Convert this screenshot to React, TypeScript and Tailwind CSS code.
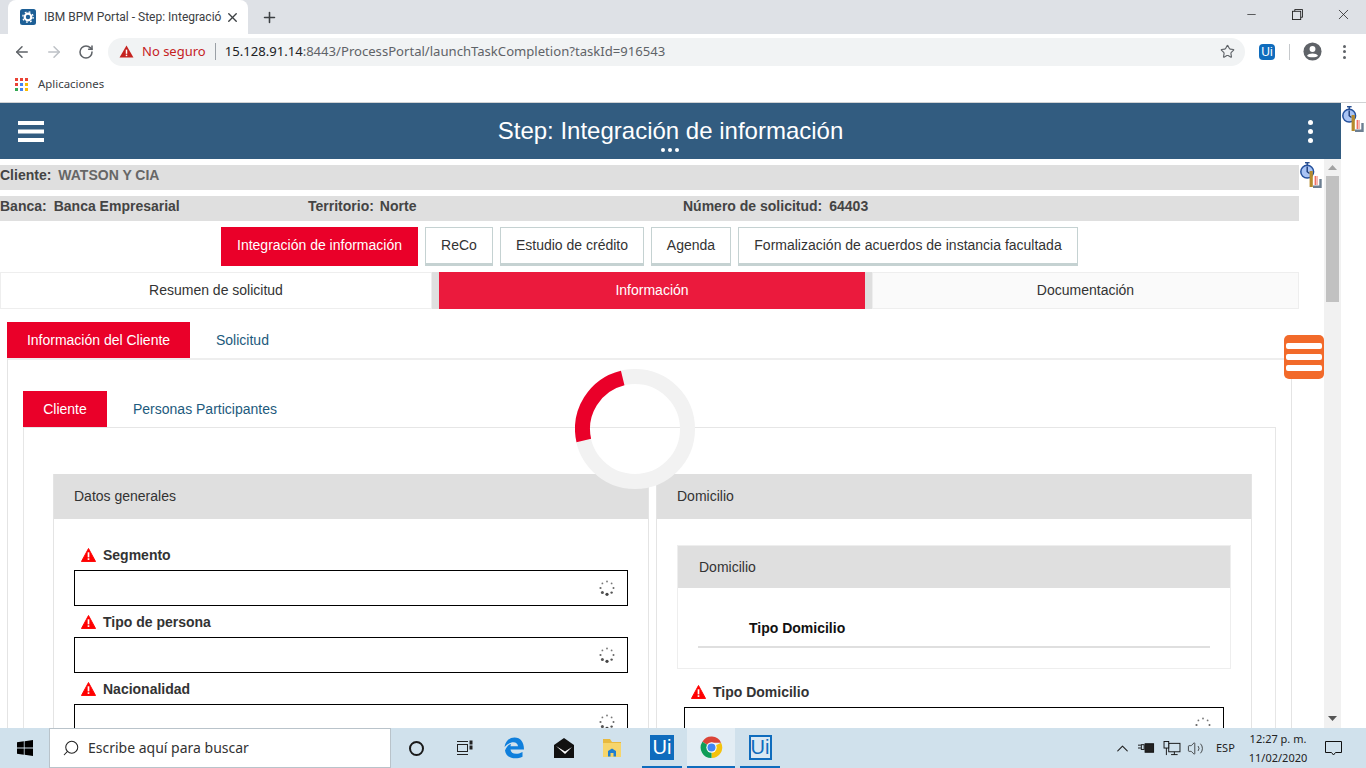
import React from 'react';
import { ArrowLeft, ArrowRight, RotateCw, Star, Plus, X, Minus, ChevronUp, Search, Volume2 } from 'lucide-react';

const chromeFont = "font-['Noto_Sans',sans-serif]";

const WarnIcon: React.FC<{ className?: string }> = ({ className }) => (
    <svg viewBox="0 0 16 15" className={className}>
        <path d="M8 0.5 L15.6 14.5 L0.4 14.5 Z" fill="#f00" stroke="#f00" strokeLinejoin="round" />
        <rect x="7.1" y="4.6" width="1.8" height="5.4" fill="#fff" />
        <rect x="7.1" y="11" width="1.8" height="1.8" fill="#fff" />
    </svg>
);

const Dots: React.FC = () => (
    <svg viewBox="0 0 16 16" className="w-4 h-4">
        <circle cx="8" cy="1.5" r="0.9" fill="#777" />
        <circle cx="12.6" cy="3.4" r="0.9" fill="#777" />
        <circle cx="14.5" cy="8" r="1" fill="#666" />
        <circle cx="12.6" cy="12.6" r="1.2" fill="#555" />
        <circle cx="8" cy="14.3" r="1.6" fill="#444" />
        <circle cx="3.4" cy="12.6" r="1.5" fill="#555" />
        <circle cx="1.5" cy="8" r="1.1" fill="#666" />
        <circle cx="3.4" cy="3.4" r="0.9" fill="#777" />
    </svg>
);

const Profiler: React.FC<{ className: string }> = ({ className }) => (
    <svg viewBox="0 0 22 26" className={className}>
        <rect x="5" y="0" width="4.6" height="1.4" fill="#2a4f8f" />
        <rect x="6.5" y="1" width="1.6" height="2" fill="#2a4f8f" />
        <circle cx="7.2" cy="9.7" r="6.4" fill="#a9c4f5" stroke="#24509c" strokeWidth="1.5" />
        <path d="M7.2 4.6 V9.7 L9.5 11.5" stroke="#1d3c78" strokeWidth="1.4" fill="none" />
        <rect x="9.6" y="9" width="3.2" height="16" fill="#b58a2c" />
        <rect x="14.6" y="14" width="1.5" height="9" fill="#ef6f65" />
        <rect x="16.1" y="14" width="1.9" height="9" fill="#f7b5ad" />
        <path d="M13 24.8 H20.5 V17" stroke="#6d7f92" strokeWidth="2.4" fill="none" />
    </svg>
);

const UiLogo: React.FC<{ outline?: boolean; className: string }> = ({ outline, className }) => (
    <div className={`flex items-center justify-center font-['Liberation_Sans',sans-serif] ${outline ? 'border-2 border-[#0f6cbd] text-[#0f6cbd] bg-[#d9e8f3]' : 'bg-[#0f6cbd] text-white'} ${className}`}>
        Ui
    </div>
);

const Field: React.FC<{ label: string }> = ({ label }) => (
    <div>
        <div className="flex items-center h-[31px] pl-[7px]">
            <WarnIcon className="w-[15px] h-[14px] mr-[7px]" />
            <span className="text-sm font-bold text-[#333]">{label}</span>
        </div>
        <div className="h-[36px] border border-black bg-white flex items-center justify-end pr-[12px]">
            <Dots />
        </div>
    </div>
);

const Browser: React.FC = () => (
    <div className={`${chromeFont} shrink-0`}>
        <div className="h-[34px] bg-[#dee1e6] flex items-end">
            <div className="ml-[8px] w-[240px] h-[34px] bg-white rounded-t-lg flex items-center pl-[12px] pr-[8px]">
                <svg viewBox="0 0 16 16" className="w-4 h-4 shrink-0">
                    <rect width="16" height="16" rx="2.5" fill="#1d5f96" />
                    <circle cx="8" cy="8" r="3.3" fill="none" stroke="#fff" strokeWidth="2.2" />
                    <circle cx="8" cy="8" r="5.2" fill="none" stroke="#fff" strokeWidth="1.3" strokeDasharray="1.8 2.3" />
                </svg>
                <span className="ml-[8px] text-xs font-['Roboto',sans-serif] text-[#3c4043] whitespace-nowrap">IBM BPM Portal - Step: Integració</span>
                <X size={15} strokeWidth={2.2} className="ml-auto text-[#3c4043]" />
            </div>
            <Plus size={17} strokeWidth={2.2} className="ml-[13px] mb-[8px] text-[#3c4043]" />
            <div className="ml-auto flex items-center h-[34px] pb-[6px] text-[#222]">
                <div className="w-[46px] flex justify-center"><Minus size={13} strokeWidth={1.3} /></div>
                <div className="w-[46px] flex justify-center">
                    <svg viewBox="0 0 12 12" className="w-[11px] h-[11px]" fill="none" stroke="#222">
                        <rect x="0.5" y="2.5" width="9" height="9" />
                        <path d="M3 2.5 V0.5 H11.5 V9 H9.5" />
                    </svg>
                </div>
                <div className="w-[46px] flex justify-center"><X size={17} strokeWidth={1.1} /></div>
            </div>
        </div>
        <div className="h-[35px] bg-white flex items-center">
            <ArrowLeft size={18} className="ml-[13px] text-[#5f6368]" />
            <ArrowRight size={18} className="ml-[14px] text-[#bdc1c6]" />
            <RotateCw size={16} strokeWidth={2.3} className="ml-[15px] text-[#5f6368]" />
            <div className="ml-[14px] w-[1137px] h-[28px] rounded-full bg-[#f1f3f4] flex items-center pl-[11px] pr-[10px]">
                <svg viewBox="0 0 16 14" className="w-[15px] h-[13px]">
                    <path d="M8 0.5 L15.5 13.5 H0.5 Z" fill="#c5221f" />
                    <rect x="7.2" y="5" width="1.6" height="4.5" fill="#fff" />
                    <rect x="7.2" y="10.4" width="1.6" height="1.6" fill="#fff" />
                </svg>
                <span className="ml-[8px] text-[13px] text-[#c5221f]">No seguro</span>
                <span className="ml-[9px] w-px h-[17px] bg-[#9aa0a6]"></span>
                <span className="ml-[9px] text-[13.1px] text-[#202124]">15.128.91.14<span className="text-[#5f6368]">:8443/ProcessPortal/launchTaskCompletion?taskId=916543</span></span>
                <Star size={15} strokeWidth={1.8} className="ml-auto text-[#5f6368]" />
            </div>
            <UiLogo className="ml-[14px] w-4 h-4 rounded-sm text-[12px]" />
            <span className="ml-[14px] w-px h-[16px] bg-[#c6c9cc]"></span>
            <svg viewBox="0 0 20 20" className="ml-[13px] w-[19px] h-[19px]">
                <circle cx="10" cy="10" r="9.5" fill="#5f6368" />
                <circle cx="10" cy="7.4" r="3.1" fill="#fff" />
                <path d="M4.2 14.4 C6 11.4 14 11.4 15.8 14.4 C14 16.6 6 16.6 4.2 14.4 Z" fill="#fff" />
            </svg>
            <div className="ml-[21px] flex flex-col gap-[2.5px]">
                <span className="w-[3px] h-[3px] rounded-full bg-[#5f6368]"></span>
                <span className="w-[3px] h-[3px] rounded-full bg-[#5f6368]"></span>
                <span className="w-[3px] h-[3px] rounded-full bg-[#5f6368]"></span>
            </div>
        </div>
        <div className="h-[34px] pb-[2px] bg-white flex items-center border-b border-[#d0d2d4] pl-[15px]">
            <svg viewBox="0 0 13 13" className="w-[13px] h-[13px]">
                {[['#ea4335', '#ea4335', '#ea4335'], ['#ea4335', '#4285f4', '#fbbc04'], ['#34a853', '#4285f4', '#fbbc04']].map((row, y) =>
                    row.map((c, x) => <rect key={`${x}${y}`} x={x * 5} y={y * 5} width="3" height="3" fill={c} />)
                )}
            </svg>
            <span className="ml-[10px] text-[11.4px] text-[#3c4043] mb-[2px]">Aplicaciones</span>
        </div>
    </div>
);

const Taskbar: React.FC = () => (
    <div className={`${chromeFont} h-[40px] shrink-0 bg-[#d0e1ec] flex items-stretch relative z-10`}>
        <div className="w-[49px] flex items-center justify-center">
            <svg viewBox="0 0 16 16" className="w-4 h-4 fill-black">
                <path d="M0 2.3 L6.8 1.3 V7.6 H0 Z M7.6 1.2 L16 0 V7.6 H7.6 Z M0 8.4 H6.8 V14.7 L0 13.7 Z M7.6 8.4 H16 V16 L7.6 14.8 Z" />
            </svg>
        </div>
        <div className="w-[342px] bg-white border border-[#b9c3ca] flex items-center pl-[12px]">
            <Search size={18} strokeWidth={1.4} className="text-[#222] -scale-x-100" />
            <span className="ml-[8px] text-sm text-[#333]">Escribe aquí para buscar</span>
        </div>
        <div className="w-[50px] flex items-center justify-center">
            <span className="w-[15px] h-[15px] rounded-full border-[2.5px] border-[#1a1a1a]"></span>
        </div>
        <div className="w-[46px] flex items-center justify-center">
            <svg viewBox="0 0 18 18" className="w-[18px] h-[18px]" fill="none" stroke="#222">
                <rect x="2.5" y="5.5" width="10" height="7" />
                <path d="M2 2.5 H13 M2 15.5 H13" />
                <rect x="15" y="2" width="2" height="3" fill="#222" />
                <rect x="15" y="7" width="2" height="3" fill="#222" />
            </svg>
        </div>
        <div className="w-[54px] flex items-center justify-center">
            <svg viewBox="0 0 22 22" className="w-[22px] h-[22px]">
                <path d="M1.5 10 C2.5 3.5 7 0.5 11.5 0.5 C17.5 0.5 21 5 21 12.5 H7.5 C7.8 17 13.5 18.3 19.5 15 V19.8 C12.5 23 3 21.5 2 13.5 C3.5 9.5 6 7.5 8 7 C7.7 7.8 7.6 8.6 7.5 9.3 H15 C15 4.5 8 2.8 1.5 10 Z" fill="#0f7fdc" />
            </svg>
        </div>
        <div className="w-[46px] flex items-center justify-center">
            <svg viewBox="0 0 22 22" className="w-[22px] h-[22px]">
                <path d="M1 8 L11 1 L21 8 V21 H1 Z" fill="#111" />
                <path d="M3 9 L12 14.5 L19 10 L12 17 Z" fill="#fff" />
            </svg>
        </div>
        <div className="w-[50px] flex items-center justify-center">
            <svg viewBox="0 0 22 22" className="w-[22px] h-[22px]">
                <path d="M2 2 H9 L11 5 H20 V20 H2 Z" fill="#e8b93f" />
                <rect x="2" y="6" width="18" height="14" fill="#f6d56b" />
                <path d="M7 19.5 V14 L11 11.5 L15 14 V19.5 H12.5 V16 H9.5 V19.5 Z" fill="#1f7fd0" />
            </svg>
        </div>
        <div className="ml-[5px] w-[40px] mr-[5px] flex items-center justify-center border-b-2 border-[#0f6cbd]">
            <UiLogo className="w-[24px] h-[25px] text-[20px]" />
        </div>
        <div className="w-[48px] bg-[#e3edf4] flex items-center justify-center border-b-2 border-[#0f6cbd]">
            <svg viewBox="0 0 24 24" className="w-[23px] h-[23px]">
                <path d="M12 12 L2.5 6 A11 11 0 0 1 22 7 H12 Z" fill="#db4437" />
                <path d="M12 12 L22 7 A11 11 0 0 1 12 23 Z" fill="#f4c20d" />
                <path d="M12 12 L12 23 A11 11 0 0 1 2.5 6 Z" fill="#0f9d58" />
                <circle cx="12" cy="12" r="5.4" fill="#fff" />
                <circle cx="12" cy="12" r="4.2" fill="#4285f4" />
            </svg>
        </div>
        <div className="ml-[5px] w-[40px] flex items-center justify-center border-b-2 border-[#0f6cbd]">
            <UiLogo outline className="w-[23px] h-[25px] text-[20px]" />
        </div>
        <div className="ml-auto flex items-center pr-[16px] text-[#222]">
            <ChevronUp size={19} strokeWidth={1.4} />
            <svg viewBox="0 0 18 12" className="ml-[6px] w-[17px] h-[12px]" fill="none" stroke="#111">
                <path d="M0 3 H3 M0 6 H3" />
                <rect x="3.5" y="2.5" width="3" height="5" />
                <rect x="7.5" y="1.5" width="9" height="9" fill="#222" />
            </svg>
            <svg viewBox="0 0 18 16" className="ml-[8px] w-[18px] h-[15px]" fill="none" stroke="#111">
                <rect x="5.5" y="2.5" width="12" height="9" />
                <rect x="0.5" y="0.5" width="5" height="7" fill="#d0e1ec" />
                <path d="M3 7.5 V15 M8 14.5 H15 M11.5 11.5 V14.5" />
            </svg>
            <Volume2 size={17} strokeWidth={1.1} className="ml-[6px]" />
            <span className="ml-[12px] text-[11px] w-[24px]">ESP</span>
            <div className="ml-[8px] w-[60px] text-center text-[11px] leading-[19px] text-[#222]">
                <div>12:27 p. m.</div>
                <div>11/02/2020</div>
            </div>
            <div className="ml-[8px] w-[34px] flex justify-center">
                <svg viewBox="0 0 17 15" className="w-[17px] h-[15px]" fill="none" stroke="#111">
                    <path d="M0.5 0.5 H16.5 V11.5 H10.5 L8.5 14 L6.5 11.5 H0.5 Z" />
                </svg>
            </div>
        </div>
    </div>
);

const App: React.FC = () => {
    return (
        <div className="w-[1366px] h-[768px] overflow-hidden flex flex-col bg-white font-['Liberation_Sans',Arial,sans-serif] text-[#333]">
            <Browser />
            <div className="flex-1 min-h-0 flex relative overflow-hidden">
                <div className="w-[1341px] flex flex-col">
                    <header className="h-[56px] shrink-0 bg-[#325c80] flex items-center justify-center relative text-white">
                        <svg viewBox="0 0 26 21" className="absolute left-[18px] top-[18px] w-[26px] h-[21px] fill-white">
                            <rect width="26" height="4" y="0" />
                            <rect width="26" height="4" y="8.5" />
                            <rect width="26" height="4" y="17" />
                        </svg>
                        <h1 className="text-2xl">Step: Integración de información</h1>
                        <div className="absolute left-[661px] bottom-[7px] flex gap-[3px]">
                            <span className="w-1 h-1 rounded-full bg-white"></span>
                            <span className="w-1 h-1 rounded-full bg-white"></span>
                            <span className="w-1 h-1 rounded-full bg-white"></span>
                        </div>
                        <div className="absolute right-[28px] top-[17px] flex flex-col gap-[4px]">
                            <span className="w-[5px] h-[5px] rounded-full bg-white"></span>
                            <span className="w-[5px] h-[5px] rounded-full bg-white"></span>
                            <span className="w-[5px] h-[5px] rounded-full bg-white"></span>
                        </div>
                    </header>
                    <div className="flex-1 min-h-0 flex">
                        <main className="w-[1324px] overflow-hidden">
                            <div className="w-[1299px] pt-[6px]">
                                <div className="h-[25px] pb-[6px] bg-[#dfdfdf] flex items-center text-sm font-bold text-[#444]">
                                    <span>Cliente:</span><span className="ml-[7px] text-[#666]">WATSON Y CIA</span>
                                </div>
                                <div className="mt-[6px] h-[25px] pb-[6px] bg-[#dfdfdf] flex items-center text-sm font-bold text-[#444]">
                                    <div className="w-[308px]">Banca:<span className="ml-[7px]">Banca Empresarial</span></div>
                                    <div className="w-[375px]">Territorio:<span className="ml-[6px]">Norte</span></div>
                                    <div>Número de solicitud:<span className="ml-[7px]">64403</span></div>
                                </div>
                                <div className="mt-[6px] flex pl-[221px] gap-[7px] text-sm text-[#333]">
                                    <div className="h-[39px] w-[197px] pb-[4px] bg-[#ea0029] text-white flex items-center justify-center">Integración de información</div>
                                    {[['ReCo', 'w-[68px]'], ['Estudio de crédito', 'w-[144px]'], ['Agenda', 'w-[80px]'], ['Formalización de acuerdos de instancia facultada', 'w-[340px]']].map(([t, w]) => (
                                        <div key={t} className={`h-[39px] ${w} pb-[2px] border border-[#c5d2d2] border-b-[3px] flex items-center justify-center`}>{t}</div>
                                    ))}
                                </div>
                                <div className="mt-[6px] h-[37px] flex bg-[#dfdfdf] text-sm text-[#333]">
                                    <div className="w-[432px] pb-[2px] bg-white border border-[#eee] flex items-center justify-center">Resumen de solicitud</div>
                                    <div className="ml-[7px] w-[426px] pb-[2px] bg-[#eb1a3d] text-white flex items-center justify-center">Información</div>
                                    <div className="ml-[7px] w-[427px] pb-[2px] bg-[#fafafa] border border-[#eee] flex items-center justify-center">Documentación</div>
                                </div>
                            </div>
                            <div className="pl-[7px] w-[1292px] mt-[13px]">
                                <div className="flex h-[36px] text-sm">
                                    <div className="w-[183px] bg-[#ea0029] text-white flex items-center justify-center">Información del Cliente</div>
                                    <div className="ml-[26px] flex items-center text-[#1d5a7d]">Solicitud</div>
                                </div>
                                <div className="border-t-2 border-x border-t-[#eeeeee] border-x-[#e4e4e4] pl-[15px] pr-[15px] pt-[31px] h-[500px]">
                                    <div className="flex h-[36px] text-sm">
                                        <div className="w-[84px] bg-[#ea0029] text-white flex items-center justify-center">Cliente</div>
                                        <div className="ml-[26px] flex items-center text-[#1d5a7d]">Personas Participantes</div>
                                    </div>
                                    <div className="border border-[#e6e6e6] h-[400px] pt-[46px] pl-[29px] flex gap-[7px] items-start">
                                        <section className="w-[596px] border-x border-[#e4e4e4]">
                                            <div className="h-[45px] pb-[1px] bg-[#dfdfdf] flex items-center pl-[20px] text-sm text-[#333]">Datos generales</div>
                                            <div className="pt-[20px] px-[20px]">
                                                <Field label="Segmento" />
                                                <Field label="Tipo de persona" />
                                                <Field label="Nacionalidad" />
                                            </div>
                                        </section>
                                        <section className="w-[596px] border-x border-[#e4e4e4]">
                                            <div className="h-[45px] pb-[1px] bg-[#dfdfdf] flex items-center pl-[20px] text-sm text-[#333]">Domicilio</div>
                                            <div className="pt-[26px] px-[20px]">
                                                <div className="border border-[#eee] h-[124px]">
                                                    <div className="h-[42px] bg-[#dfdfdf] flex items-center pl-[21px] text-sm text-[#333]">Domicilio</div>
                                                    <div className="mx-[20px] h-[60px] pl-[51px] border-b-2 border-[#dfdfdf] flex items-end pb-[8px] text-sm font-bold text-[#111]">Tipo Domicilio</div>
                                                </div>
                                                <div className="mx-[7px] mt-[7px]">
                                                    <Field label="Tipo Domicilio" />
                                                </div>
                                            </div>
                                        </section>
                                    </div>
                                </div>
                            </div>
                        </main>
                        <div className="w-[17px] bg-[#f1f1f1] flex flex-col items-center relative">
                            <svg viewBox="0 0 9 5" className="w-[9px] h-[5px] mt-[6px] fill-[#a3a3a3]"><path d="M4.5 0 L9 5 H0 Z" /></svg>
                            <div className="mt-[6px] w-[13px] h-[126px] bg-[#c1c1c1]"></div>
                            <svg viewBox="0 0 9 5" className="w-[9px] h-[5px] mt-auto mb-[7px] fill-[#555]"><path d="M0 0 H9 L4.5 5 Z" /></svg>
                        </div>
                    </div>
                </div>
                <Profiler className="absolute left-[1342px] top-[3px] w-[22px] h-[26px]" />
                <Profiler className="absolute left-[1300px] top-[59px] w-[22px] h-[26px]" />
                <div className="absolute left-[1284px] top-[232px] w-[40px] h-[44px] rounded-[5px] bg-[#f26a2a] flex flex-col justify-center gap-[5px] px-[2px]">
                    <span className="h-[6px] rounded-[2px] bg-white"></span>
                    <span className="h-[6px] rounded-[2px] bg-white"></span>
                    <span className="h-[6px] rounded-[2px] bg-white"></span>
                </div>
                <svg viewBox="0 0 120 120" className="absolute left-[575px] top-[266px] w-[120px] h-[120px]" fill="none" strokeWidth="15">
                    <circle cx="60" cy="60" r="52.5" stroke="#f2f2f2" />
                    <path d="M47.7 9 A52.5 52.5 0 0 0 8.8 71.5" stroke="#ea0029" />
                </svg>
            </div>
            <Taskbar />
        </div>
    );
};

export default App;
